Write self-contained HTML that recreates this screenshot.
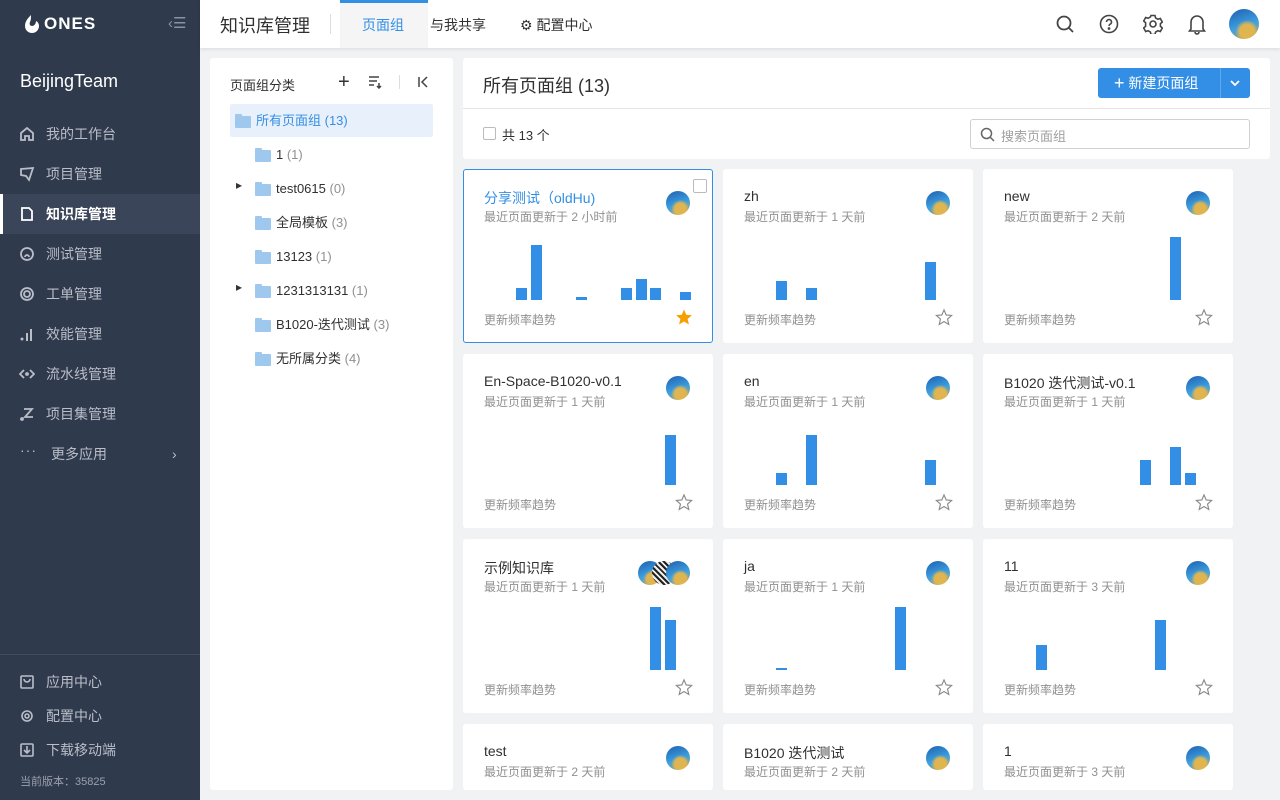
<!DOCTYPE html>
<html><head><meta charset="utf-8"><style>
*{box-sizing:border-box;margin:0;padding:0}
html{width:1280px;height:800px;overflow:hidden}
body{width:1280px;height:800px;overflow:hidden;background:#f1f2f4;font-family:"Liberation Sans","Noto Sans CJK SC",sans-serif;position:relative;color:#303030}
.a{position:absolute}
.side{left:0;top:0;width:200px;height:800px;background:#303a4d}
.nav{position:absolute;left:0;width:200px;height:40px;color:#b9bec8;font-size:14px;line-height:40px;padding-left:46px}
.nav svg{position:absolute;left:19px;top:12px}
.nav.on{background:#3b4559;color:#fff;font-weight:bold}
.nav.on:before{content:"";position:absolute;left:0;top:0;width:3px;height:40px;background:#fff}
.top{left:200px;top:0;width:1080px;height:48px;background:#fff;box-shadow:0 1px 4px rgba(0,0,0,.1)}
.tree{left:210px;top:58px;width:243px;height:732px;background:#fff;border-radius:3px}
.ti{position:absolute;left:46px;font-size:13px;color:#303030;line-height:20px}
.ti i{font-style:normal;color:#909090}
.fold{position:absolute;width:16px;height:12px;background:#9fc8ef;border-radius:1px}
.fold:before{content:"";position:absolute;left:0;top:-2px;width:7px;height:3px;background:#9fc8ef;border-radius:1px 1px 0 0}
.card{position:absolute;width:250px;height:174px;background:#fff;border-radius:3px;overflow:hidden}
.card .t{position:absolute;left:21px;top:19px;font-size:14px;color:#303030}
.card .s{position:absolute;left:21px;top:39px;font-size:12px;color:#909090}
.card .f{position:absolute;left:21px;top:142px;font-size:12px;color:#909090}
.card .b{position:absolute;width:11px;background:#338fe5}
.av{position:absolute;width:24px;height:24px;border-radius:50%;background:radial-gradient(circle at 60% 75%,#e0b550 0 25%,transparent 40%),linear-gradient(160deg,#1e5fb0,#3da0e0 55%,#c8a850);}
.card .av{left:203px;top:22px}
.star{position:absolute;left:212px;top:139px}
</style></head><body>
<div class="a side">
  <svg class="a" style="left:22px;top:14px" width="20" height="20" viewBox="0 0 20 20"><path d="M9 1C5 5 3 8 3 12a7 7 0 0 0 14 0c0-2-1-4-3-5 0 3-2 5-4 5-2 0-3-2-2-4 1-2 1-4 1-7z" fill="#fff"/></svg>
  <div class="a" style="left:44px;top:14px;color:#fff;font-size:17px;font-weight:bold;letter-spacing:1px">ONES</div>
  <div class="a" style="left:168px;top:14px;color:#8a93a3;font-size:15px">‹☰</div>
  <div class="a" style="left:20px;top:71px;color:#fff;font-size:18px">BeijingTeam</div>
  <div class="nav" style="top:114px"><svg width="16" height="16" viewBox="0 0 16 16" fill="none" stroke="#b9bec8" stroke-width="1.8"><path d="M2 7l6-5 6 5v7H10v-4H6v4H2z"/></svg>我的工作台</div>
  <div class="nav" style="top:154px"><svg width="16" height="16" viewBox="0 0 16 16" fill="none" stroke="#b9bec8" stroke-width="1.8"><path d="M2 3l12-1-4 12-3-4-5-1z"/></svg>项目管理</div>
  <div class="nav on" style="top:194px"><svg width="16" height="16" viewBox="0 0 16 16" fill="none" stroke="#fff" stroke-width="1.8"><path d="M3 2h7l3 3v9H3z"/></svg>知识库管理</div>
  <div class="nav" style="top:234px"><svg width="16" height="16" viewBox="0 0 16 16" fill="none" stroke="#b9bec8" stroke-width="1.8"><circle cx="8" cy="8" r="6"/><path d="M6 11a2 2 0 1 1 4 0"/></svg>测试管理</div>
  <div class="nav" style="top:274px"><svg width="16" height="16" viewBox="0 0 16 16" fill="none" stroke="#b9bec8" stroke-width="1.8"><circle cx="8" cy="8" r="6"/><circle cx="8" cy="8" r="3"/></svg>工单管理</div>
  <div class="nav" style="top:314px"><svg width="16" height="16" viewBox="0 0 16 16" fill="#b9bec8"><circle cx="3" cy="13" r="1.5"/><rect x="7" y="7" width="2" height="8"/><rect x="11" y="3" width="2" height="12"/></svg>效能管理</div>
  <div class="nav" style="top:354px"><svg width="16" height="16" viewBox="0 0 16 16" fill="none" stroke="#b9bec8" stroke-width="1.8"><path d="M5 4L1 8l4 4M11 4l4 4-4 4"/><circle cx="8" cy="8" r="1" fill="#b9bec8"/></svg>流水线管理</div>
  <div class="nav" style="top:394px"><svg width="16" height="16" viewBox="0 0 16 16" fill="none" stroke="#b9bec8" stroke-width="1.8"><path d="M5 3h8l-7 8h8"/><circle cx="3" cy="13" r="1" fill="#b9bec8"/></svg>项目集管理</div>
  <div class="nav" style="top:434px;padding-left:51px"><span class="a" style="left:20px;top:-4px;letter-spacing:1px">···</span>更多应用<span class="a" style="left:172px">›</span></div>
  <div class="a" style="left:0;top:654px;width:200px;height:1px;background:#434c5e"></div>
  <div class="nav" style="top:662px"><svg width="16" height="16" viewBox="0 0 16 16" fill="none" stroke="#b9bec8" stroke-width="1.6"><rect x="2" y="2" width="12" height="12" rx="1"/><path d="M5 5a3 3 0 0 0 6 0"/></svg>应用中心</div>
  <div class="nav" style="top:696px"><svg width="16" height="16" viewBox="0 0 16 16" fill="none" stroke="#b9bec8" stroke-width="1.6"><circle cx="8" cy="8" r="5"/><circle cx="8" cy="8" r="2"/></svg>配置中心</div>
  <div class="nav" style="top:730px"><svg width="16" height="16" viewBox="0 0 16 16" fill="none" stroke="#b9bec8" stroke-width="1.6"><rect x="2" y="2" width="12" height="12" rx="1"/><path d="M8 4v7M5 8l3 3 3-3"/></svg>下载移动端</div>
  <div class="a" style="left:20px;top:773px;font-size:11px;color:#9aa1ad">当前版本：35825</div>
</div>

<div class="a top">
  <div class="a" style="left:20px;top:12px;font-size:18px;color:#303030">知识库管理</div>
  <div class="a" style="left:130px;top:14px;width:1px;height:20px;background:#ddd"></div>
  <div class="a" style="left:140px;top:0;width:88px;height:48px;background:#f5f5f5;border-top:3px solid #338fe5"></div>
  <div class="a" style="left:162px;top:15px;font-size:14px;color:#338fe5">页面组</div>
  <div class="a" style="left:230px;top:15px;font-size:14px;color:#303030">与我共享</div>
  <div class="a" style="left:320px;top:15px;font-size:14px;color:#303030">⚙ 配置中心</div>
  <svg class="a" style="left:855px;top:14px" width="20" height="20" viewBox="0 0 20 20" fill="none" stroke="#444" stroke-width="1.8"><circle cx="9" cy="9" r="6.5"/><path d="M14 14l4 4"/></svg>
  <svg class="a" style="left:899px;top:14px" width="20" height="20" viewBox="0 0 20 20" fill="none" stroke="#444" stroke-width="1.6"><circle cx="10" cy="10" r="8.5"/><path d="M7.5 8a2.5 2.5 0 1 1 3.5 2.3c-.7.4-1 .9-1 1.7"/><circle cx="10" cy="14.5" r=".6" fill="#444"/></svg>
  <svg class="a" style="left:943px;top:14px" width="20" height="20" viewBox="0 0 20 20" fill="none" stroke="#444" stroke-width="1.6"><path d="M8 1.5h4l.6 2.5 2.3 1.3 2.4-.8 2 3.5-1.9 1.7v2.6l1.9 1.7-2 3.5-2.4-.8-2.3 1.3-.6 2.5H8l-.6-2.5-2.3-1.3-2.4.8-2-3.5 1.9-1.7V8.7L.7 7l2-3.5 2.4.8 2.3-1.3z"/><circle cx="10" cy="10" r="3"/></svg>
  <svg class="a" style="left:987px;top:13px" width="20" height="22" viewBox="0 0 20 22" fill="none" stroke="#444" stroke-width="1.6"><path d="M4 16V9a6 6 0 0 1 12 0v7l1.5 2h-15z"/><path d="M8 19a2 2 0 0 0 4 0"/></svg>
  <div class="av" style="left:1029px;top:9px;width:30px;height:30px"></div>
</div>

<div class="a tree">
  <div class="a" style="left:20px;top:17px;font-size:13px;color:#303030">页面组分类</div>
  <div class="a" style="left:128px;top:12px;font-size:20px;color:#333;line-height:24px">+</div>
  <svg class="a" style="left:158px;top:17px" width="14" height="14" viewBox="0 0 14 14" stroke="#444" stroke-width="1.5"><path d="M1 2h10M1 6h8M1 10h5M11 8v5M9 11l2 2 2-2" fill="none"/></svg>
  <div class="a" style="left:189px;top:17px;width:1px;height:14px;background:#ddd"></div>
  <svg class="a" style="left:207px;top:18px" width="12" height="12" viewBox="0 0 12 12" stroke="#444" stroke-width="1.5" fill="none"><path d="M2 1v10M10 1L5 6l5 5"/></svg>
  <div class="a" style="left:20px;top:46px;width:203px;height:33px;background:#e8f1fb;border-radius:2px"></div>
  <div class="fold" style="left:25px;top:58px"></div><div class="ti" style="left:46px;top:53px;color:#338fe5">所有页面组 (13)</div>
  <div class="fold" style="left:45px;top:92px"></div><div class="ti" style="left:66px;top:87px">1 <i>(1)</i></div>
  <div class="a" style="left:26px;top:120px;font-size:12px;color:#333">▸</div>
  <div class="fold" style="left:45px;top:126px"></div><div class="ti" style="left:66px;top:121px">test0615 <i>(0)</i></div>
  <div class="fold" style="left:45px;top:160px"></div><div class="ti" style="left:66px;top:155px">全局模板 <i>(3)</i></div>
  <div class="fold" style="left:45px;top:194px"></div><div class="ti" style="left:66px;top:189px">13123 <i>(1)</i></div>
  <div class="a" style="left:26px;top:222px;font-size:12px;color:#333">▸</div>
  <div class="fold" style="left:45px;top:228px"></div><div class="ti" style="left:66px;top:223px">1231313131 <i>(1)</i></div>
  <div class="fold" style="left:45px;top:262px"></div><div class="ti" style="left:66px;top:257px">B1020-迭代测试 <i>(3)</i></div>
  <div class="fold" style="left:45px;top:296px"></div><div class="ti" style="left:66px;top:291px">无所属分类 <i>(4)</i></div>
</div>

<div class="a" style="left:463px;top:58px;width:807px;height:101px;background:#fff;border-radius:3px">
  <div class="a" style="left:20px;top:14px;font-size:18px;color:#303030">所有页面组 (13)</div>
  <div class="a" style="left:635px;top:10px;width:152px;height:30px;background:#338fe5;border-radius:3px;color:#fff;font-size:14px;line-height:30px;padding-left:16px"><span style="font-size:18px;vertical-align:-1px">+</span> 新建页面组<span class="a" style="left:122px;top:0;width:1px;height:30px;background:#5ea8ec"></span><svg class="a" style="left:131px;top:11px" width="12" height="8" viewBox="0 0 12 8" fill="none" stroke="#fff" stroke-width="1.8"><path d="M2 2l4 4 4-4"/></svg></div>
  <div class="a" style="left:0;top:50px;width:807px;height:1px;background:#e5e5e5"></div>
  <div class="a" style="left:20px;top:69px;width:13px;height:13px;border:1px solid #bbb;border-radius:2px"></div>
  <div class="a" style="left:39px;top:67px;font-size:13px;color:#303030">共 13 个</div>
  <div class="a" style="left:507px;top:61px;width:280px;height:30px;border:1px solid #d0d0d0;border-radius:3px"><svg class="a" style="left:9px;top:7px" width="15" height="15" viewBox="0 0 15 15" fill="none" stroke="#666" stroke-width="1.5"><circle cx="6.5" cy="6.5" r="5"/><path d="M10 10l4 4"/></svg><span class="a" style="left:30px;top:6px;font-size:13px;color:#a0a0a0">搜索页面组</span></div>
</div>

<!-- row 1 -->
<div class="card" style="left:463px;top:169px;border:1px solid #338fe5">
  <div class="t" style="color:#338fe5;left:20px;top:18px">分享测试（oldHu)</div><div class="s" style="left:20px;top:38px">最近页面更新于 2 小时前</div>
  <div class="a" style="left:229px;top:9px;width:14px;height:14px;border:1px solid #bbb;border-radius:2px"></div>
  <div class="av" style="left:202px;top:21px"></div>
  <div class="b" style="left:52px;top:118px;height:12px"></div><div class="b" style="left:67px;top:75px;height:55px"></div><div class="b" style="left:112px;top:127px;height:3px"></div><div class="b" style="left:157px;top:118px;height:12px"></div><div class="b" style="left:172px;top:109px;height:21px"></div><div class="b" style="left:186px;top:118px;height:12px"></div><div class="b" style="left:216px;top:122px;height:8px"></div>
  <div class="f" style="left:20px;top:141px">更新频率趋势</div>
  <svg class="star" style="left:211px;top:138px" width="18" height="18" viewBox="0 0 24 24"><path d="M12 2l3 7 7.5.6-5.7 5 1.8 7.4L12 18l-6.6 4 1.8-7.4-5.7-5L9 9z" fill="#f5a000"/></svg>
</div>
<div class="card" style="left:723px;top:169px">
  <div class="t">zh</div><div class="s">最近页面更新于 1 天前</div><div class="av"></div>
  <div class="b" style="left:53px;top:112px;height:19px"></div><div class="b" style="left:83px;top:119px;height:12px"></div><div class="b" style="left:202px;top:93px;height:38px"></div>
  <div class="f">更新频率趋势</div>
  <svg class="star" width="18" height="18" viewBox="0 0 24 24"><path d="M12 2.5l2.9 6.8 7.3.6-5.5 4.8 1.7 7.2L12 18l-6.4 3.9 1.7-7.2-5.5-4.8 7.3-.6z" fill="none" stroke="#888" stroke-width="1.5"/></svg>
</div>
<div class="card" style="left:983px;top:169px">
  <div class="t">new</div><div class="s">最近页面更新于 2 天前</div><div class="av"></div>
  <div class="b" style="left:187px;top:68px;height:63px"></div>
  <div class="f">更新频率趋势</div>
  <svg class="star" width="18" height="18" viewBox="0 0 24 24"><path d="M12 2.5l2.9 6.8 7.3.6-5.5 4.8 1.7 7.2L12 18l-6.4 3.9 1.7-7.2-5.5-4.8 7.3-.6z" fill="none" stroke="#888" stroke-width="1.5"/></svg>
</div>
<!-- row 2 -->
<div class="card" style="left:463px;top:354px">
  <div class="t">En-Space-B1020-v0.1</div><div class="s">最近页面更新于 1 天前</div><div class="av"></div>
  <div class="b" style="left:202px;top:81px;height:50px"></div>
  <div class="f">更新频率趋势</div>
  <svg class="star" width="18" height="18" viewBox="0 0 24 24"><path d="M12 2.5l2.9 6.8 7.3.6-5.5 4.8 1.7 7.2L12 18l-6.4 3.9 1.7-7.2-5.5-4.8 7.3-.6z" fill="none" stroke="#888" stroke-width="1.5"/></svg>
</div>
<div class="card" style="left:723px;top:354px">
  <div class="t">en</div><div class="s">最近页面更新于 1 天前</div><div class="av"></div>
  <div class="b" style="left:53px;top:119px;height:12px"></div><div class="b" style="left:83px;top:81px;height:50px"></div><div class="b" style="left:202px;top:106px;height:25px"></div>
  <div class="f">更新频率趋势</div>
  <svg class="star" width="18" height="18" viewBox="0 0 24 24"><path d="M12 2.5l2.9 6.8 7.3.6-5.5 4.8 1.7 7.2L12 18l-6.4 3.9 1.7-7.2-5.5-4.8 7.3-.6z" fill="none" stroke="#888" stroke-width="1.5"/></svg>
</div>
<div class="card" style="left:983px;top:354px">
  <div class="t">B1020 迭代测试-v0.1</div><div class="s">最近页面更新于 1 天前</div><div class="av"></div>
  <div class="b" style="left:157px;top:106px;height:25px"></div><div class="b" style="left:187px;top:93px;height:38px"></div><div class="b" style="left:202px;top:119px;height:12px"></div>
  <div class="f">更新频率趋势</div>
  <svg class="star" width="18" height="18" viewBox="0 0 24 24"><path d="M12 2.5l2.9 6.8 7.3.6-5.5 4.8 1.7 7.2L12 18l-6.4 3.9 1.7-7.2-5.5-4.8 7.3-.6z" fill="none" stroke="#888" stroke-width="1.5"/></svg>
</div>
<!-- row 3 -->
<div class="card" style="left:463px;top:539px">
  <div class="t">示例知识库</div><div class="s">最近页面更新于 1 天前</div>
  <div class="av" style="left:175px"></div><div class="av" style="left:189px;background:repeating-linear-gradient(45deg,#222 0 2px,#eee 2px 4px)"></div><div class="av"></div>
  <div class="b" style="left:187px;top:68px;height:63px"></div><div class="b" style="left:202px;top:81px;height:50px"></div>
  <div class="f">更新频率趋势</div>
  <svg class="star" width="18" height="18" viewBox="0 0 24 24"><path d="M12 2.5l2.9 6.8 7.3.6-5.5 4.8 1.7 7.2L12 18l-6.4 3.9 1.7-7.2-5.5-4.8 7.3-.6z" fill="none" stroke="#888" stroke-width="1.5"/></svg>
</div>
<div class="card" style="left:723px;top:539px">
  <div class="t">ja</div><div class="s">最近页面更新于 1 天前</div><div class="av"></div>
  <div class="b" style="left:53px;top:129px;height:2px"></div><div class="b" style="left:172px;top:68px;height:63px"></div>
  <div class="f">更新频率趋势</div>
  <svg class="star" width="18" height="18" viewBox="0 0 24 24"><path d="M12 2.5l2.9 6.8 7.3.6-5.5 4.8 1.7 7.2L12 18l-6.4 3.9 1.7-7.2-5.5-4.8 7.3-.6z" fill="none" stroke="#888" stroke-width="1.5"/></svg>
</div>
<div class="card" style="left:983px;top:539px">
  <div class="t">11</div><div class="s">最近页面更新于 3 天前</div><div class="av"></div>
  <div class="b" style="left:53px;top:106px;height:25px"></div><div class="b" style="left:172px;top:81px;height:50px"></div>
  <div class="f">更新频率趋势</div>
  <svg class="star" width="18" height="18" viewBox="0 0 24 24"><path d="M12 2.5l2.9 6.8 7.3.6-5.5 4.8 1.7 7.2L12 18l-6.4 3.9 1.7-7.2-5.5-4.8 7.3-.6z" fill="none" stroke="#888" stroke-width="1.5"/></svg>
</div>
<!-- row 4 -->
<div class="card" style="left:463px;top:724px;height:66px"><div class="t">test</div><div class="s">最近页面更新于 2 天前</div><div class="av"></div></div>
<div class="card" style="left:723px;top:724px;height:66px"><div class="t">B1020 迭代测试</div><div class="s">最近页面更新于 2 天前</div><div class="av"></div></div>
<div class="card" style="left:983px;top:724px;height:66px"><div class="t">1</div><div class="s">最近页面更新于 3 天前</div><div class="av"></div></div>
</body></html>
